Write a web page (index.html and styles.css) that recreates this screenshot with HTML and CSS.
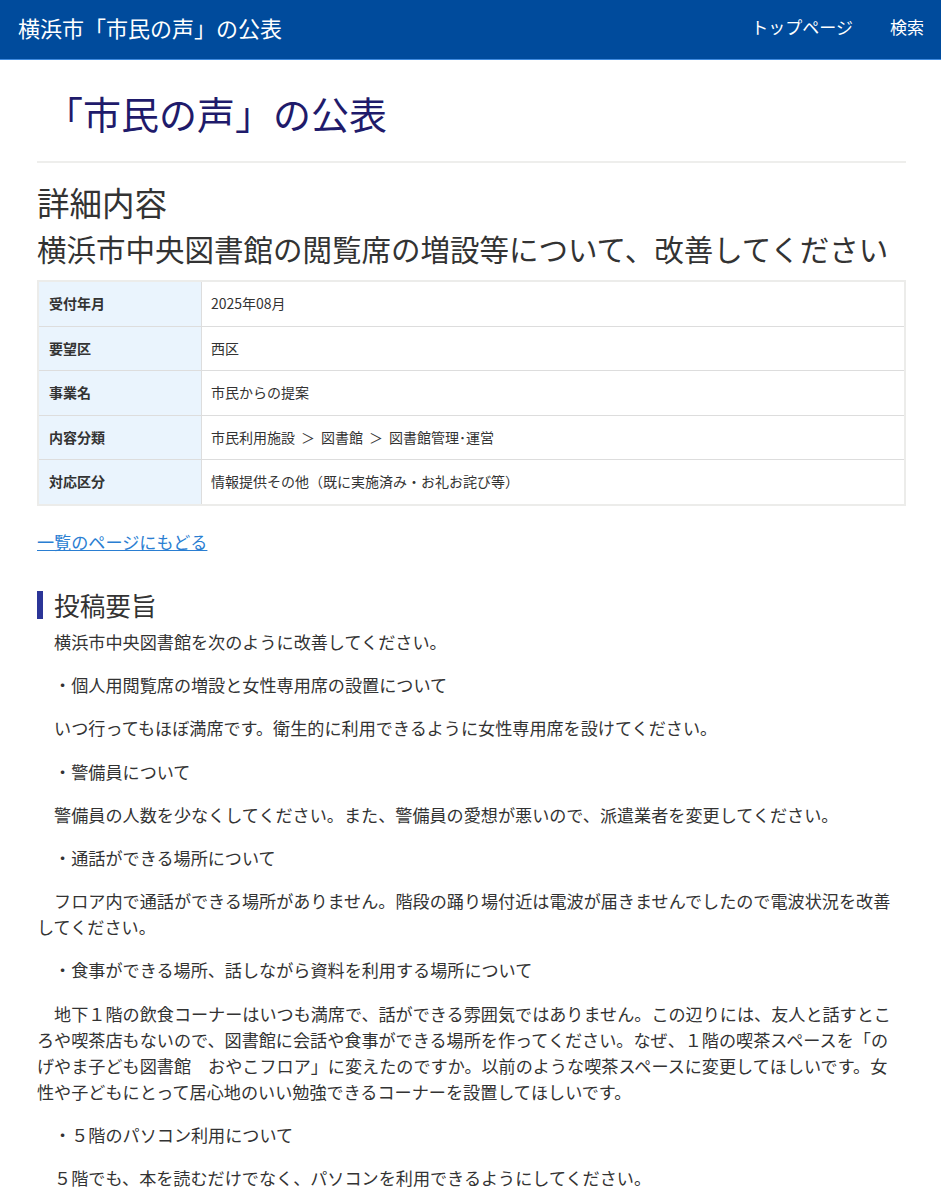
FILE: index.html
```html
<!DOCTYPE html>
<html lang="ja">
<head>
<meta charset="utf-8">
<title>「市民の声」の公表</title>
<link rel="stylesheet" href="styles.css">
</head>
<body>
<header class="site-header">
  <div class="site-title">横浜市「市民の声」の公表</div>
  <nav class="site-nav">
    <a href="#">トップページ</a>
    <a href="#">検索</a>
  </nav>
</header>
<main class="container">
  <h1 class="page-title">「市民の声」の公表</h1>
  <hr class="divider">
  <h2 class="detail-heading">詳細内容</h2>
  <h3 class="detail-title">横浜市中央図書館の閲覧席の増設等について、改善してください</h3>
  <table class="info-table">
    <tr><th>受付年月</th><td>2025年08月</td></tr>
    <tr><th>要望区</th><td>西区</td></tr>
    <tr><th>事業名</th><td>市民からの提案</td></tr>
    <tr><th>内容分類</th><td>市民利用施設<span class="sep">＞</span>図書館<span class="sep">＞</span>図書館管理･運営</td></tr>
    <tr><th>対応区分</th><td>情報提供その他（既に実施済み・お礼お詫び等）</td></tr>
  </table>
  <p class="back-link"><a href="#">一覧のページにもどる</a></p>
  <h2 class="section-heading">投稿要旨</h2>
  <div class="body-text">
    <p>　横浜市中央図書館を次のように改善してください。</p>
    <p>　・個人用閲覧席の増設と女性専用席の設置について</p>
    <p>　いつ行ってもほぼ満席です。衛生的に利用できるように女性専用席を設けてください。</p>
    <p>　・警備員について</p>
    <p>　警備員の人数を少なくしてください。また、警備員の愛想が悪いので、派遣業者を変更してください。</p>
    <p>　・通話ができる場所について</p>
    <p>　フロア内で通話ができる場所がありません。階段の踊り場付近は電波が届きませんでしたので電波状況を改善してください。</p>
    <p>　・食事ができる場所、話しながら資料を利用する場所について</p>
    <p>　地下１階の飲食コーナーはいつも満席で、話ができる雰囲気ではありません。この辺りには、友人と話すところや喫茶店もないので、図書館に会話や食事ができる場所を作ってください。なぜ、１階の喫茶スペースを「のげやま子ども図書館　おやこフロア」に変えたのですか。以前のような喫茶スペースに変更してほしいです。女性や子どもにとって居心地のいい勉強できるコーナーを設置してほしいです。</p>
    <p>　・５階のパソコン利用について</p>
    <p>　５階でも、本を読むだけでなく、パソコンを利用できるようにしてください。</p>
  </div>
</main>
</body>
</html>
```

FILE: styles.css
```css
html, body {
  margin: 0;
  padding: 0;
}
body {
  font-family: "Noto Sans CJK JP", "Noto Sans", sans-serif;
  color: #333;
  background: #fff;
  font-size: 17.12px;
}
.site-header {
  height: 59px;
  background: #004b9c;
  border-bottom: 1px solid #3f8be0;
  display: flex;
  align-items: center;
  justify-content: space-between;
  padding: 0 17px 0 18px;
  box-sizing: content-box;
}
.site-title {
  color: #fff;
  font-size: 22px;
  line-height: 1;
  margin-top: -6px;
}
.site-nav {
  display: flex;
  gap: 37px;
  margin-top: -6px;
}
.site-nav a {
  color: #fff;
  text-decoration: none;
  font-size: 17px;
}
.container {
  padding: 0 35px 0 37px;
}
.page-title {
  margin: 30px 0 0 0;
  padding-left: 8px;
  font-size: 38px;
  font-weight: normal;
  line-height: 46px;
  color: #1f1b6b;
}
.divider {
  border: 0;
  border-top: 2px solid #eeeeec;
  margin: 25px 0 0 0;
}
.detail-heading {
  margin: 18px 0 0 0;
  font-size: 32.5px;
  font-weight: normal;
  line-height: 42px;
  color: #333;
}
.detail-title {
  margin: 5px 0 0 0;
  font-size: 29.5px;
  font-weight: normal;
  line-height: 40px;
  color: #333;
}
.info-table {
  margin-top: 12px;
  width: 100%;
  border-collapse: collapse;
  border: 2px solid #ececea;
  font-size: 14px;
}
.info-table th,
.info-table td {
  border: 1px solid #dddddd;
  padding: 11px 10px;
  line-height: 21.6px;
  text-align: left;
}
.info-table th {
  width: 142px;
  background: #eaf4fd;
  font-weight: bold;
  color: #333;
}
.info-table td {
  font-weight: normal;
  color: #333;
  padding-left: 9px;
}
.sep {
  margin: 0 6px;
}
.back-link {
  margin: 23px 0 0 0;
  line-height: 26px;
}
.back-link a {
  color: #2a7ed2;
  text-decoration: underline;
}
.section-heading {
  margin: 36px 0 0 0;
  border-left: 6px solid #2b3598;
  padding-left: 11px;
  font-size: 25.7px;
  font-weight: normal;
  line-height: 28px;
  color: #333;
}
.body-text {
  margin-top: 10px;
  padding-right: 9px;
}
.body-text p {
  margin: 0 0 17.1px 0;
  line-height: 26.1px;
}
```
